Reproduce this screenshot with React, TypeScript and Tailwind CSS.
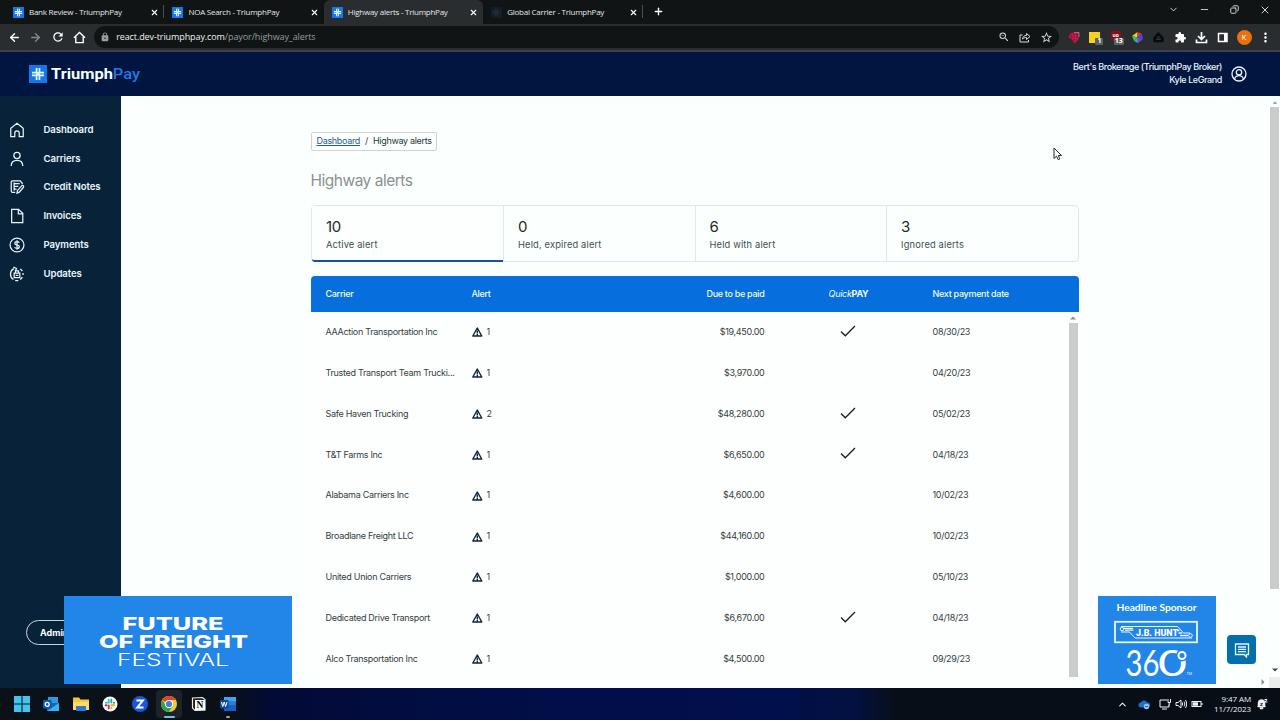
import React from 'react';
import { ArrowLeft, ArrowRight, ChevronDown, ChevronUp, Copy, Minus, Plus, X } from 'lucide-react';
import { MdExtension, MdLock, MdMoreVert, MdRefresh, MdStarBorder, MdZoomOut } from 'react-icons/md';

interface TabProps {
  title: string;
  active?: boolean;
  faded?: boolean;
  divider?: boolean;
}

const CrossMark: React.FC<{ className?: string }> = ({ className }) => (
  <svg viewBox="0 0 18 18" className={className}>
    <rect width="18" height="18" fill="#1478e8" />
    <path d="M9 3v12M3 9h12" stroke="#e6fbff" strokeWidth="4.6" />
    <path d="M9 3v12M3 9h12" stroke="#1478e8" strokeWidth="1.1" />
    <path d="M7 9h4M9 7v4" stroke="#e6fbff" strokeWidth="1.6" />
  </svg>
);

const BrowserTab: React.FC<TabProps> = ({ title, active, faded, divider }) => (
  <div className={`relative flex h-full w-[159.4px] items-center rounded-t-md pl-2 pr-[5px] ${active ? 'bg-[#292d2f]' : ''}`}>
    <CrossMark className={`h-[11px] w-[11px] shrink-0 ${faded ? 'opacity-10' : ''}`} />
    <span className="ml-[5px] flex-1 whitespace-nowrap text-[8px] font-medium tracking-[-0.25px] text-[#e4e8e8]">{title}</span>
    <X className="h-[9px] w-[9px] text-white" strokeWidth={3} />
    {divider && <span className="absolute right-0 top-[5px] h-[13px] w-px bg-[#4a4e50]" />}
  </div>
);

const NAV = [
  {
    label: 'Dashboard',
    icon: <path d="M9 1.500 16 7v9.500h-4.500v-4a2.500 2.500 0 0 0-5 0v4H2V7z" />,
  },
  {
    label: 'Carriers',
    icon: (
      <>
        <circle cx="9" cy="5" r="3.500" />
        <path d="M2.500 17c0-4.300 2.800-6.500 6.500-6.500s6.500 2.200 6.500 6.500" />
      </>
    ),
  },
  {
    label: 'Credit Notes',
    icon: (
      <>
        <path d="M7 15H4a1.500 1.500 0 0 1-1.500-1.500v-10A1.500 1.500 0 0 1 4 2h8.500l2.300 2.500V6M5 5.300h7M5 8.300h5.500M5 11.300h3.500M5.800 4v9" />
        <path d="m9 16 .5-3 5-5.500c1-.8 2.600.6 1.800 1.800l-4.700 5.500z" />
      </>
    ),
  },
  {
    label: 'Invoices',
    icon: <path d="M3 1.500h7.700L15.500 6v10.500H3zM10.500 1.500v5h5" />,
  },
  {
    label: 'Payments',
    icon: (
      <>
        <circle cx="9" cy="9" r="7.800" />
        <path d="M11.500 6.500C11 5.500 10.200 5.200 9 5.200c-3.200 0-3.300 3.400 0 3.800 3.600.4 3.300 3.900 0 3.900-1.300 0-2.200-.5-2.600-1.500M9 3.700v10.700" />
      </>
    ),
  },
  {
    label: 'Updates',
    icon: (
      <>
        <path d="M5.500 3A7 7 0 0 0 5 15.200M7 16.200a7 7 0 0 0 3.500 0M12.500 15.200a7 7 0 0 0 2.500-2.700M15.800 10V8M15 5.800a7 7 0 0 0-2.500-2.500M5 1.200l3.500 1.600L7 6" />
        <path d="M5.800 13V8h6.400v5zM7.300 8V5.500h3.400V8M7.500 10.500h3" />
      </>
    ),
  },
];

const STATS = [
  { count: 10, label: 'Active alert' },
  { count: 0, label: 'Held, expired alert' },
  { count: 6, label: 'Held with alert' },
  { count: 3, label: 'Ignored alerts' },
];

const ROWS = [
  { carrier: 'AAAction Transportation Inc', alerts: 1, due: '$19,450.00', quick: true, date: '08/30/23' },
  { carrier: 'Trusted Transport Team Trucki...', alerts: 1, due: '$3,970.00', quick: false, date: '04/20/23' },
  { carrier: 'Safe Haven Trucking', alerts: 2, due: '$48,280.00', quick: true, date: '05/02/23' },
  { carrier: 'T&T Farms Inc', alerts: 1, due: '$6,650.00', quick: true, date: '04/18/23' },
  { carrier: 'Alabama Carriers Inc', alerts: 1, due: '$4,600.00', quick: false, date: '10/02/23' },
  { carrier: 'Broadlane Freight LLC', alerts: 1, due: '$44,160.00', quick: false, date: '10/02/23' },
  { carrier: 'United Union Carriers', alerts: 1, due: '$1,000.00', quick: false, date: '05/10/23' },
  { carrier: 'Dedicated Drive Transport', alerts: 1, due: '$6,670.00', quick: true, date: '04/18/23' },
  { carrier: 'Alco Transportation Inc', alerts: 1, due: '$4,500.00', quick: false, date: '09/29/23' },
];

const COLUMNS = 'grid grid-cols-[146px_150px_143px_168px_1fr] items-center pl-[15px] tracking-[-0.3px]';

const Browser = () => (
  <div className="font-['Open_Sans',sans-serif]">
    <div className="flex h-6 bg-[#101415] pl-[5px]">
      <BrowserTab title="Bank Review - TriumphPay" divider />
      <BrowserTab title="NOA Search - TriumphPay" />
      <BrowserTab title="Highway alerts - TriumphPay" active />
      <BrowserTab title="Global Carrier - TriumphPay" faded divider />
      <Plus className="ml-[10px] mt-[6px] h-[11px] w-[11px] text-white" strokeWidth={3} />
      <div className="ml-auto flex h-[19px] items-center gap-[20px] pr-[9px] text-[#d5d8d8]">
        <ChevronDown className="h-[11px] w-[11px]" />
        <Minus className="h-[11px] w-[11px]" />
        <Copy className="h-[9px] w-[9px] -scale-x-100" strokeWidth={2.500} />
        <X className="h-[12px] w-[12px]" />
      </div>
    </div>
    <div className="flex h-[28px] items-center bg-[#292d2f] pl-2 border-b-2 border-[#394453]">
      <div className="flex items-center gap-[8.400px] text-white">
        <ArrowLeft className="h-[13px] w-[13px]" strokeWidth={2.600} />
        <ArrowRight className="h-[13px] w-[13px] text-[#85898b]" strokeWidth={2.400} />
        <MdRefresh className="h-[14px] w-[14px]" />
        <svg viewBox="0 0 14 14" className="h-[13px] w-[13px]" fill="none" stroke="currentColor" strokeWidth="1.500">
          <path d="M1 7.200 7 1.500l6 5.700M3 6v6.500h8V6" />
        </svg>
      </div>
      <div className="ml-[8px] flex h-[22px] w-[965px] items-center rounded-full bg-[#101415] pl-[6px] pr-[6px]">
        <MdLock className="h-[10px] w-[10px] text-[#9a9e9f]" />
        <span className="ml-[6px] flex-1 text-[9px] tracking-[-0.1px] text-[#989c9d]">
          <span className="text-[#eef2f2]">react.dev-triumphpay.com</span>/payor/highway_alerts
        </span>
        <div className="flex items-center gap-[9px] text-[#d8dcdc]">
          <MdZoomOut className="h-3 w-3" />
          <svg viewBox="0 0 12 12" className="h-3 w-3" fill="none" stroke="currentColor">
            <path d="M3.500 4H1v7h8.500V9M3.500 8c.3-2.500 1.700-3.500 4-3.500V2.500l3.500 3-3.500 3V6.500C5.500 6.500 4.500 7 3.500 8z" />
          </svg>
          <MdStarBorder className="h-[13px] w-[13px]" />
        </div>
      </div>
      <div className="ml-[7px] flex items-center gap-[6.300px]">
        <svg viewBox="0 0 15 15" className="h-[15px] w-[15px]" fill="none" stroke="#d31b46">
          <path d="M5 3.500 12.500 3 12 9l-3.500 4L7 9.500 3 7z" fill="#8d1134" />
          <path d="M5 6h6M6 8.500h6M7 4v5M9.500 3.500v8" />
          <path d="M8 2.500h5V7" stroke="#a9898f" strokeWidth=".8" />
        </svg>
        <div className="relative h-[15px] w-[15px]">
          <span className="ml-[2px] mt-[2px] block h-[11px] w-[11px] bg-[#f8d21c]" />
          <span className="absolute left-[8px] top-[8px] flex h-[7px] w-[8px] items-center justify-center rounded-[1px] bg-[#5b6062] text-[7px] font-bold text-white">1</span>
        </div>
        <div className="relative h-[15px] w-[15px]">
          <span className="ml-[2px] mt-[1px] flex h-[11px] w-[10px] items-center justify-center rounded-b-md bg-[#85101a] text-[5px] font-bold text-white">uo</span>
          <span className="absolute left-[5px] top-[8px] flex h-[7px] w-[10px] items-center justify-center rounded-[1px] bg-[#5b6062] text-[7px] font-bold text-white">13</span>
        </div>
        <svg viewBox="0 0 15 15" className="h-[15px] w-[15px]">
          <path d="M7.500 7.500 7.500 2 2 6z" fill="#e9d21d" />
          <path d="M7.500 7.500 7.500 2 12 4z" fill="#e92d3a" />
          <path d="M7.500 7.500 12 4l1 5z" fill="#2d52ec" />
          <path d="M7.500 7.500 13 9l-5 4z" fill="#8b37dc" />
          <path d="M7.500 7.500 8 13l-4-2z" fill="#25b4c9" />
          <path d="M7.500 7.500 4 11 2 6z" fill="#39c846" />
        </svg>
        <svg viewBox="0 0 15 15" className="h-[15px] w-[15px]">
          <path d="M7.500 3.500 11.500 8v3h-8V8z" fill="#080a0b" stroke="#080a0b" strokeWidth="2.500" strokeLinejoin="round" />
          <path d="m7.500 6 2 3.500h-4z" fill="none" stroke="#303638" />
        </svg>
        <MdExtension className="h-[15px] w-[15px] p-[1.500px] text-white" />
        <svg viewBox="0 0 15 15" className="h-[15px] w-[15px]" fill="none" stroke="#fff" strokeWidth="1.700">
          <path d="M7.500 2v7M4 6l3.500 3.500L11 6M2.500 9.500v3h10v-3" />
        </svg>
        <svg viewBox="0 0 15 15" className="h-[15px] w-[15px]" fill="none" stroke="#fff" strokeWidth="1.500">
          <path d="M3.500 3.500h8.500v8H3.500z" />
          <path d="M10.500 3.500v8" strokeWidth="3" />
        </svg>
        <span className="flex h-[15px] w-[15px] items-center justify-center rounded-full bg-[#e9710f] text-[8px] text-white">K</span>
        <MdMoreVert className="h-[15px] w-[15px] text-white" />
      </div>
    </div>
  </div>
);

const Header = () => (
  <header className="flex h-[44px] items-center bg-[#001540] pl-[29px] pr-[33px]">
    <CrossMark className="h-[18px] w-[18px]" />
    <svg className="ml-[4px] h-[24px] w-[92px]" viewBox="0 0 92 24">
      <text x="0" y="17" fontFamily="Roboto, sans-serif" fontWeight="700" fontSize="15.500" textLength="89" lengthAdjust="spacingAndGlyphs" fill="#f4ffff">
        Triumph<tspan fill="#2478e4" fontWeight="500">Pay</tspan>
      </text>
    </svg>
    <div className="ml-auto text-right text-[9px] font-medium leading-[12.700px] tracking-[-0.400px] text-[#e8f4fb]">
      <p>Bert's Brokerage (TriumphPay Broker)</p>
      <p>Kyle LeGrand</p>
    </div>
    <svg viewBox="0 0 16 16" className="-mt-px ml-[9px] h-[16px] w-[16px]" fill="none" stroke="#e8f4fb" strokeWidth="1.300">
      <circle cx="8" cy="8" r="7" />
      <circle cx="8" cy="6.300" r="2.700" />
      <path d="M3.500 13c.8-2.300 2.300-3.300 4.500-3.300s3.700 1 4.500 3.300" />
    </svg>
  </header>
);

const Sidebar = () => (
  <nav className="relative w-[121px] shrink-0 bg-[#08223a] pt-[19.500px]">
    {NAV.map((item) => (
      <div key={item.label} className="flex h-[28.800px] items-center pl-[9px]">
        <svg viewBox="0 0 18 18" className="h-4 w-4" fill="none" stroke="#e8f6fb" strokeWidth="1.400">
          {item.icon}
        </svg>
        <span className="ml-[18.500px] text-[9.600px] font-semibold tracking-[-0.080px] text-[#e8f6fb]">{item.label}</span>
      </div>
    ))}
    <div className="absolute left-[26px] top-[524px] flex h-[25px] w-[80px] items-center rounded-full border border-[#c5d5df] pl-[13px] text-[9px] font-bold text-white">
      Admin
    </div>
  </nav>
);

const AlertTable = () => (
  <div className="mt-[14px] flex-1">
    <div className={`${COLUMNS} h-9 rounded-t-[4px] bg-[#066edd] text-[9px] font-medium text-[#eefaff]`}>
      <span>Carrier</span>
      <span>Alert</span>
      <span className="text-right">Due to be paid</span>
      <span className="text-center"><i className="font-normal">Quick</i><b>PAY</b></span>
      <span>Next payment date</span>
    </div>
    <div className="flex bg-[#fdfefe]">
      <div className="-mt-[0.600px] flex-1">
        {ROWS.map((row) => (
          <div key={row.carrier} className={`${COLUMNS} h-[40.850px] text-[9px] text-[#33413f]`}>
            <span className="whitespace-nowrap">{row.carrier}</span>
            <span className="flex items-center gap-[4px]">
              <svg viewBox="0 0 11 10" className="mt-[1px] h-[10px] w-[11px]" fill="none" stroke="#10263c" strokeWidth="1.400" strokeLinejoin="round">
                <path d="M5.300 1 9.800 9H.8zM5.300 3.500v3M5.300 7v1.200" />
              </svg>
              {row.alerts}
            </span>
            <span className="text-right">{row.due}</span>
            <span className="flex justify-center">
              {row.quick && (
                <svg viewBox="0 0 16 12" className="-mt-[2px] mr-[1px] h-3 w-4" fill="none" stroke="#102027" strokeWidth="1.300">
                  <path d="m1 6.500 4.300 4.300L15 1" />
                </svg>
              )}
            </span>
            <span>{row.date}</span>
          </div>
        ))}
      </div>
      <div className="flex w-[10px] flex-col pt-[4px]">
        <svg viewBox="0 0 6 4" className="ml-[1px] h-[4px] w-[6px]"><path d="M0 3.500 3 .5l3 3z" fill="#8a8d8c" /></svg>
        <div className="mt-[3px] h-[354px] w-[9px] bg-[#cbcdca]" />
      </div>
    </div>
  </div>
);

const Content = () => (
  <main className="flex flex-1 bg-[#fbfffe]">
    <div className="ml-[189.500px] flex w-[768px] flex-col pt-[36px]">
      <div className="flex h-[19px] w-[126px] items-center rounded-[2px] border border-[#cfd4d3] pb-[2px] pl-[5px] text-[9px] tracking-[-0.320px] text-[#27393c]">
        <a className="text-[#28608a] underline">Dashboard</a>
        <span className="mx-[5px]">/</span>
        <span className="whitespace-nowrap">Highway alerts</span>
      </div>
      <h1 className="mt-[18px] text-[15.500px] leading-[24px] tracking-[-0.500px] text-[#8b9190]">Highway alerts</h1>
      <div className="mt-[12px] grid h-[57px] grid-cols-4 rounded-[4px] border border-[#dcebf0]">
        {STATS.map((stat, i) => (
          <div
            key={stat.label}
            className={`pt-[11px] ${i === 0 ? '-mb-px rounded-bl-[3px] border-b-[2.500px] border-[#0d56a8] bg-[#fdfefe] pl-[14.500px]' : 'border-l border-[#dcebf0] pl-[14px]'}`}
          >
            <p className="text-[15px] leading-[20px] tracking-[-0.300px] text-[#1d2b2e]">{stat.count}</p>
            <p className="text-[9.300px] leading-[16px] tracking-[0.160px] text-[#3b4f4e]">{stat.label}</p>
          </div>
        ))}
      </div>
      <AlertTable />
    </div>
    <div className="ml-auto flex w-[11px] flex-col items-center pt-[5px]">
      <svg viewBox="0 0 6 4" className="h-[3px] w-[6px]"><path d="M0 3.500 3 .5l3 3z" fill="#8a8d8c" /></svg>
      <div className="mt-[3px] h-[482px] w-[9px] bg-[#cacccc]" />
      <svg viewBox="0 0 6 4" className="mt-[79px] h-[4px] w-[6px]"><path d="M0 .5 3 3.500l3-3z" fill="#444" /></svg>
      <div className="mt-[5px] flex h-[11px] w-[11px] bg-[#eceeee]">
        <svg viewBox="0 0 4 6" className="-ml-[8px] mt-[2px] h-[6px] w-[4px] shrink-0"><path d="m.5 0 3 3-3 3z" fill="#8a8d8c" /></svg>
      </div>
    </div>
  </main>
);

const FestivalBanner = () => (
  <div className="absolute left-[64px] top-[596px] h-[88px] w-[228px] bg-[#2285e8]">
    <svg viewBox="0 0 228 88" className="h-full w-full" fill="#fff" fontFamily="Inter, sans-serif">
      <text x="58.500" y="34.300" fontSize="17.800" fontWeight="800" textLength="101" lengthAdjust="spacingAndGlyphs">FUTURE</text>
      <text x="35" y="52" fontSize="17.800" fontWeight="800" textLength="149" lengthAdjust="spacingAndGlyphs">OF FREIGHT</text>
      <text x="53" y="70" fontSize="17.800" fontWeight="300" textLength="112" lengthAdjust="spacingAndGlyphs">FESTIVAL</text>
    </svg>
  </div>
);

const SponsorBanner = () => (
  <div className="absolute left-[1098px] top-[596px] h-[88px] w-[118px] bg-[#2285e8]">
    <svg viewBox="0 0 118 88" className="h-full w-full" fill="#fff">
      <text x="18.500" y="15.300" fontFamily="Lato, sans-serif" fontWeight="700" fontSize="9.600" textLength="80" lengthAdjust="spacingAndGlyphs">Headline Sponsor</text>
      <rect x="17" y="25.800" width="82" height="20.500" fill="none" stroke="#e8f8ff" strokeWidth="1.800" />
      <g fill="none" stroke="#e8f8ff">
        <path d="M23 30.500h56.500l6 6.500H92" />
        <path d="M94 42H37l-5.500-6H23" />
        <circle cx="24" cy="33" r="1.800" />
        <circle cx="92.500" cy="39.500" r="1.800" />
        <path d="M26 32.300h9M27 34.200h8.500M79 34.500h2.500M80.500 37h3.500M82 39.500h8" strokeWidth="1.300" />
      </g>
      <text x="38" y="39.900" fontFamily="Roboto, sans-serif" fontWeight="900" fontSize="9.300" textLength="42" lengthAdjust="spacingAndGlyphs">J.B. HUNT</text>
      <g fontFamily="Lato, sans-serif" fontSize="36.500">
        <text x="27.500" y="79.500" textLength="34" lengthAdjust="spacingAndGlyphs">36</text>
        <text x="60" y="79.500" textLength="29" lengthAdjust="spacingAndGlyphs">0</text>
      </g>
      <circle cx="84" cy="59.500" r="6" fill="#2285e8" />
      <circle cx="84" cy="59.500" r="3.500" fill="none" stroke="#fff" strokeWidth="2" />
      <text x="88.500" y="79" fontFamily="Inter, sans-serif" fontSize="3.500">TM</text>
    </svg>
  </div>
);

const Taskbar = () => (
  <footer className="flex h-8 items-center bg-[linear-gradient(90deg,#0b1118_0%,#0a1018_18%,#020a35_21%,#020d44_35%,#010f4c_60%,#031040_67%,#080e18_70%,#080e15_100%)] pl-[13.500px] pr-[12px] font-['Open_Sans',sans-serif]">
    <div className="flex h-full items-center gap-[13.500px]">
      <svg viewBox="0 0 16 16" className="h-4 w-4" fill="#45c4ee">
        <path d="M0 0h7.500v7.500H0zM8.500 0H16v7.500H8.500zM0 8.500h7.500V16H0zM8.500 8.500H16V16H8.500z" />
      </svg>
      <svg viewBox="0 0 16 16" className="h-4 w-4">
        <path d="M5 1h10v8H5z" fill="#2b9be4" />
        <path d="M4 7h12v8H4z" fill="#1b62b9" />
        <path d="m4 15 12-8v8z" fill="#35b5ef" />
        <rect y="4" width="8.500" height="8.500" rx="1" fill="#0c5cae" />
        <circle cx="4.200" cy="8.300" r="2" fill="none" stroke="#fff" strokeWidth="1.300" />
      </svg>
      <svg viewBox="0 0 16 16" className="h-4 w-4">
        <path d="M0 1.500h6l1.500 2H16V14H0z" fill="#f6c63a" />
        <path d="M0 6h16v8H0z" fill="#fbdc67" />
        <path d="M3 10h10v5H3z" fill="#2a7bd0" />
      </svg>
      <svg viewBox="0 0 16 16" className="h-4 w-4" strokeWidth="1.900" strokeLinecap="round">
        <circle cx="8" cy="8" r="7.500" fill="#fff" />
        <path d="M6.700 3.800v3M3.800 6.800h1" stroke="#36bdea" />
        <path d="M9.300 6.500v-3M12.200 6.700h-.5" stroke="#2fb27b" />
        <path d="M9.300 9.300h3M9.300 12.200v-.5" stroke="#e7b12e" />
        <path d="M6.700 9.500v3M3.600 9.300h1" stroke="#dd2058" />
      </svg>
      <svg viewBox="0 0 16 16" className="h-4 w-4">
        <circle cx="8" cy="8" r="8" fill="#1a56d8" />
        <path d="M4.500 4.500h6.300l-5.500 7h6.200" fill="none" stroke="#fff" strokeWidth="2" />
      </svg>
      <div className="relative -mx-[5px] flex h-[28px] w-[26px] items-center justify-center rounded bg-[#1c2329]">
        <svg viewBox="0 0 16 16" className="h-4 w-4">
          <circle cx="8" cy="8" r="8" fill="#f7c92c" />
          <path d="M8 8 1.100 4A8 8 0 0 1 15 4H8z" fill="#e4402f" />
          <path d="M1.100 4A8 8 0 0 0 8 16l3.500-6H5z" fill="#2fa24c" />
          <circle cx="8" cy="8" r="4" fill="#fff" />
          <circle cx="8" cy="8" r="3.100" fill="#3f7fe4" />
        </svg>
        <span className="absolute bottom-0 h-[2px] w-[11px] rounded-full bg-[#68c3e8]" />
      </div>
      <svg viewBox="0 0 16 16" className="h-4 w-4">
        <path d="M1.500 2 11.500 1.500 14 3.500V14L4 14.500 1.500 12z" fill="#1a1d1f" stroke="#e9ecec" strokeWidth="1.200" />
        <rect x="4" y="4" width="10" height="10.300" fill="#fff" />
        <text x="5.500" y="12.300" fontFamily="Liberation Serif, serif" fontWeight="700" fontSize="9.500">N</text>
      </svg>
      <div className="relative flex h-[28px] items-center">
        <svg viewBox="0 0 16 16" className="h-4 w-4">
          <path d="M4 1h12v14H4z" fill="#1c5fbd" />
          <path d="M4 1h12v4H4z" fill="#42a4f0" />
          <path d="M4 5h12v4H4z" fill="#2b7dd6" />
          <rect y="4" width="8.500" height="8.500" rx="1" fill="#114a9c" />
          <path d="m1.500 6 1.300 4.500L4.200 6l1.400 4.500L7 6" fill="none" stroke="#fff" />
        </svg>
        <span className="absolute bottom-0 left-[6px] h-[2px] w-[4px] rounded-full bg-[#9fa5aa]" />
      </div>
    </div>
    <div className="ml-auto flex items-center text-[#eef2f2]">
      <ChevronUp className="h-[11px] w-[11px]" strokeWidth={2.500} />
      <svg viewBox="0 0 12 10" className="ml-[10px] h-[11px] w-[12px]">
        <path d="M3 8a2.500 2.500 0 0 1 0-5 3.300 3.300 0 0 1 6 0 2.500 2.500 0 0 1 1 5z" fill="#1972d0" />
        <circle cx="8.500" cy="7" r="2.700" fill="#8fc7f2" />
        <path d="M7 7h3" stroke="#1660b0" />
      </svg>
      <svg viewBox="0 0 12 12" className="ml-[9px] h-[12px] w-[12px]" fill="none" stroke="currentColor">
        <path d="M8 2H1v7h9V6.500M3 11h5M9 1v3.500h2.500V1M10.200 4.500v3" />
      </svg>
      <svg viewBox="0 0 12 12" className="ml-[4px] h-[12px] w-[12px]" fill="none" stroke="currentColor">
        <path d="M1 4.500h2L6 2v8L3 7.500H1zM7.500 4.500v3M9 3.500c1 1.500 1 3.500 0 5M10.500 2c1.500 2.500 1.500 5.500 0 8" />
      </svg>
      <svg viewBox="0 0 12 12" className="ml-[4px] h-[12px] w-[12px]" fill="none" stroke="currentColor">
        <rect x="1" y="3.500" width="9" height="5" />
        <path d="M2 6h5" strokeWidth="3.500" />
        <path d="M11 5v2" />
      </svg>
      <div className="ml-[8px] w-[40px] whitespace-nowrap text-right text-[8px] leading-[10.500px] tracking-[-0.100px]">
        <p>9:47 AM</p>
        <p>11/7/2023</p>
      </div>
      <svg viewBox="0 0 12 12" className="ml-[5px] h-[12px] w-[12px]">
        <path d="M2 9V5a3.500 3.500 0 0 1 7 0v4zM1 8.500h9M4 9.500h3V11H4z" fill="#eef2f2" stroke="#eef2f2" strokeWidth=".5" />
        <text x="4" y="8" fontFamily="Open Sans, sans-serif" fontSize="6" fontWeight="700" fill="#11181d">z</text>
        <path d="M8.500 1.500H11l-2 2.500h2.500" fill="none" stroke="#eef2f2" />
      </svg>
    </div>
  </footer>
);

export default function App() {
  return (
    <div className="relative flex h-[720px] w-[1280px] flex-col overflow-hidden bg-[#fbfffe] font-['Inter',sans-serif]">
      <Browser />
      <Header />
      <div className="flex h-[592px] overflow-hidden">
        <Sidebar />
        <Content />
      </div>
      <Taskbar />

      {/* Chat launcher */}
      <div className="absolute left-[1227px] top-[635px] flex h-[29px] w-[29px] items-center justify-center rounded-[4px] bg-[#056fae]">
        <svg viewBox="0 0 16 16" className="h-4 w-4" fill="none" stroke="#e4f8ff" strokeWidth="1.300">
          <path d="M1.500 2h13v10.500h-2V15L10 12.500H1.500zM4 5h8M4 7.300h8M4 9.600h8" />
        </svg>
      </div>
      <FestivalBanner />
      <SponsorBanner />

      {/* Mouse pointer */}
      <svg viewBox="0 0 10 14" className="absolute left-[1053px] top-[147px] h-[14px] w-[10px]">
        <path d="M1 1v10.500l2.500-2.300 1.700 3.500 1.600-.8L5.300 8.500h3.200z" fill="#fff" stroke="#222b2d" />
      </svg>
    </div>
  );
}
